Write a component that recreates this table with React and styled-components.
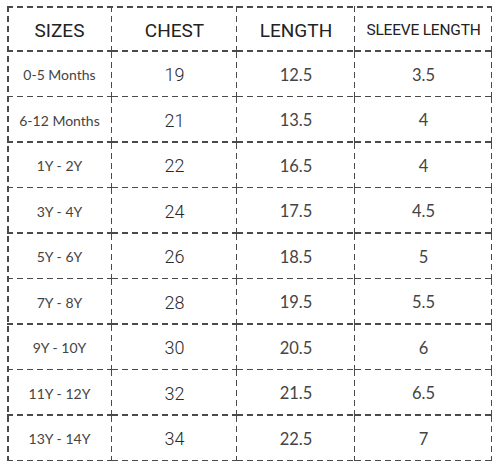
import React from "react";
import styled, { createGlobalStyle } from "styled-components";

const Global = createGlobalStyle`
  html, body { margin: 0; padding: 0; background: #fff; }
`;

const dashH = "linear-gradient(to right, #4a4a4a 0 6px, transparent 6px 10px)";
const dashV = "linear-gradient(to bottom, #4a4a4a 0 6px, transparent 6px 10px)";

const Table = styled.div`
  margin: 6px 0 0 7px;
  display: grid;
  grid-template-columns: 105px 125px 118px 137px;
  grid-auto-rows: 45.5px;
  width: 485px;
  background-image: ${dashH}, ${dashV};
  background-repeat: repeat-x, repeat-y;
  background-size: 10px 1.5px, 1.5px 10px;
  background-position: 0 0, 0 0;
`;

const Cell = styled.div`
  display: flex;
  align-items: center;
  justify-content: center;
  padding-top: ${(p) => (p.$head ? "3px" : "1px")};
  background-image: ${dashH}, ${dashV};
  background-repeat: repeat-x, repeat-y;
  background-size: 10px 1.5px, 1.5px 10px;
  background-position: 0 100%, 100% 0;
  color: ${(p) => (p.$head ? "#222" : p.$kind === "chest" ? "#2a2a2a" : "#444")};
  font-family: ${(p) =>
    p.$kind === "chest" || p.$head
      ? "Roboto, 'Liberation Sans', sans-serif"
      : "Lato, 'Open Sans', sans-serif"};
  font-weight: ${(p) => (p.$kind === "chest" ? 300 : 400)};
  font-size: ${(p) =>
    p.$head ? (p.$small ? "15.5px" : "19px") : p.$kind === "chest" ? "18px" : p.$kind === "size" ? "14px" : "16.5px"};
  letter-spacing: ${(p) => (p.$small ? "-0.2px" : "0")};
  white-space: nowrap;
`;

const heads = ["SIZES", "CHEST", "LENGTH", "SLEEVE LENGTH"];
const rows = [
  ["0-5 Months", "19", "12.5", "3.5"],
  ["6-12 Months", "21", "13.5", "4"],
  ["1Y - 2Y", "22", "16.5", "4"],
  ["3Y - 4Y", "24", "17.5", "4.5"],
  ["5Y - 6Y", "26", "18.5", "5"],
  ["7Y - 8Y", "28", "19.5", "5.5"],
  ["9Y - 10Y", "30", "20.5", "6"],
  ["11Y - 12Y", "32", "21.5", "6.5"],
  ["13Y - 14Y", "34", "22.5", "7"],
];
const kinds = ["size", "chest", "len", "sleeve"];

export default function App() {
  return (
    <>
      <Global />
      <Table>
        {heads.map((h, i) => (
          <Cell key={h} $head $small={i === 3}>
            {h}
          </Cell>
        ))}
        {rows.map((r) =>
          r.map((v, i) => (
            <Cell key={r[0] + i} $kind={kinds[i]}>
              {v}
            </Cell>
          ))
        )}
      </Table>
    </>
  );
}
